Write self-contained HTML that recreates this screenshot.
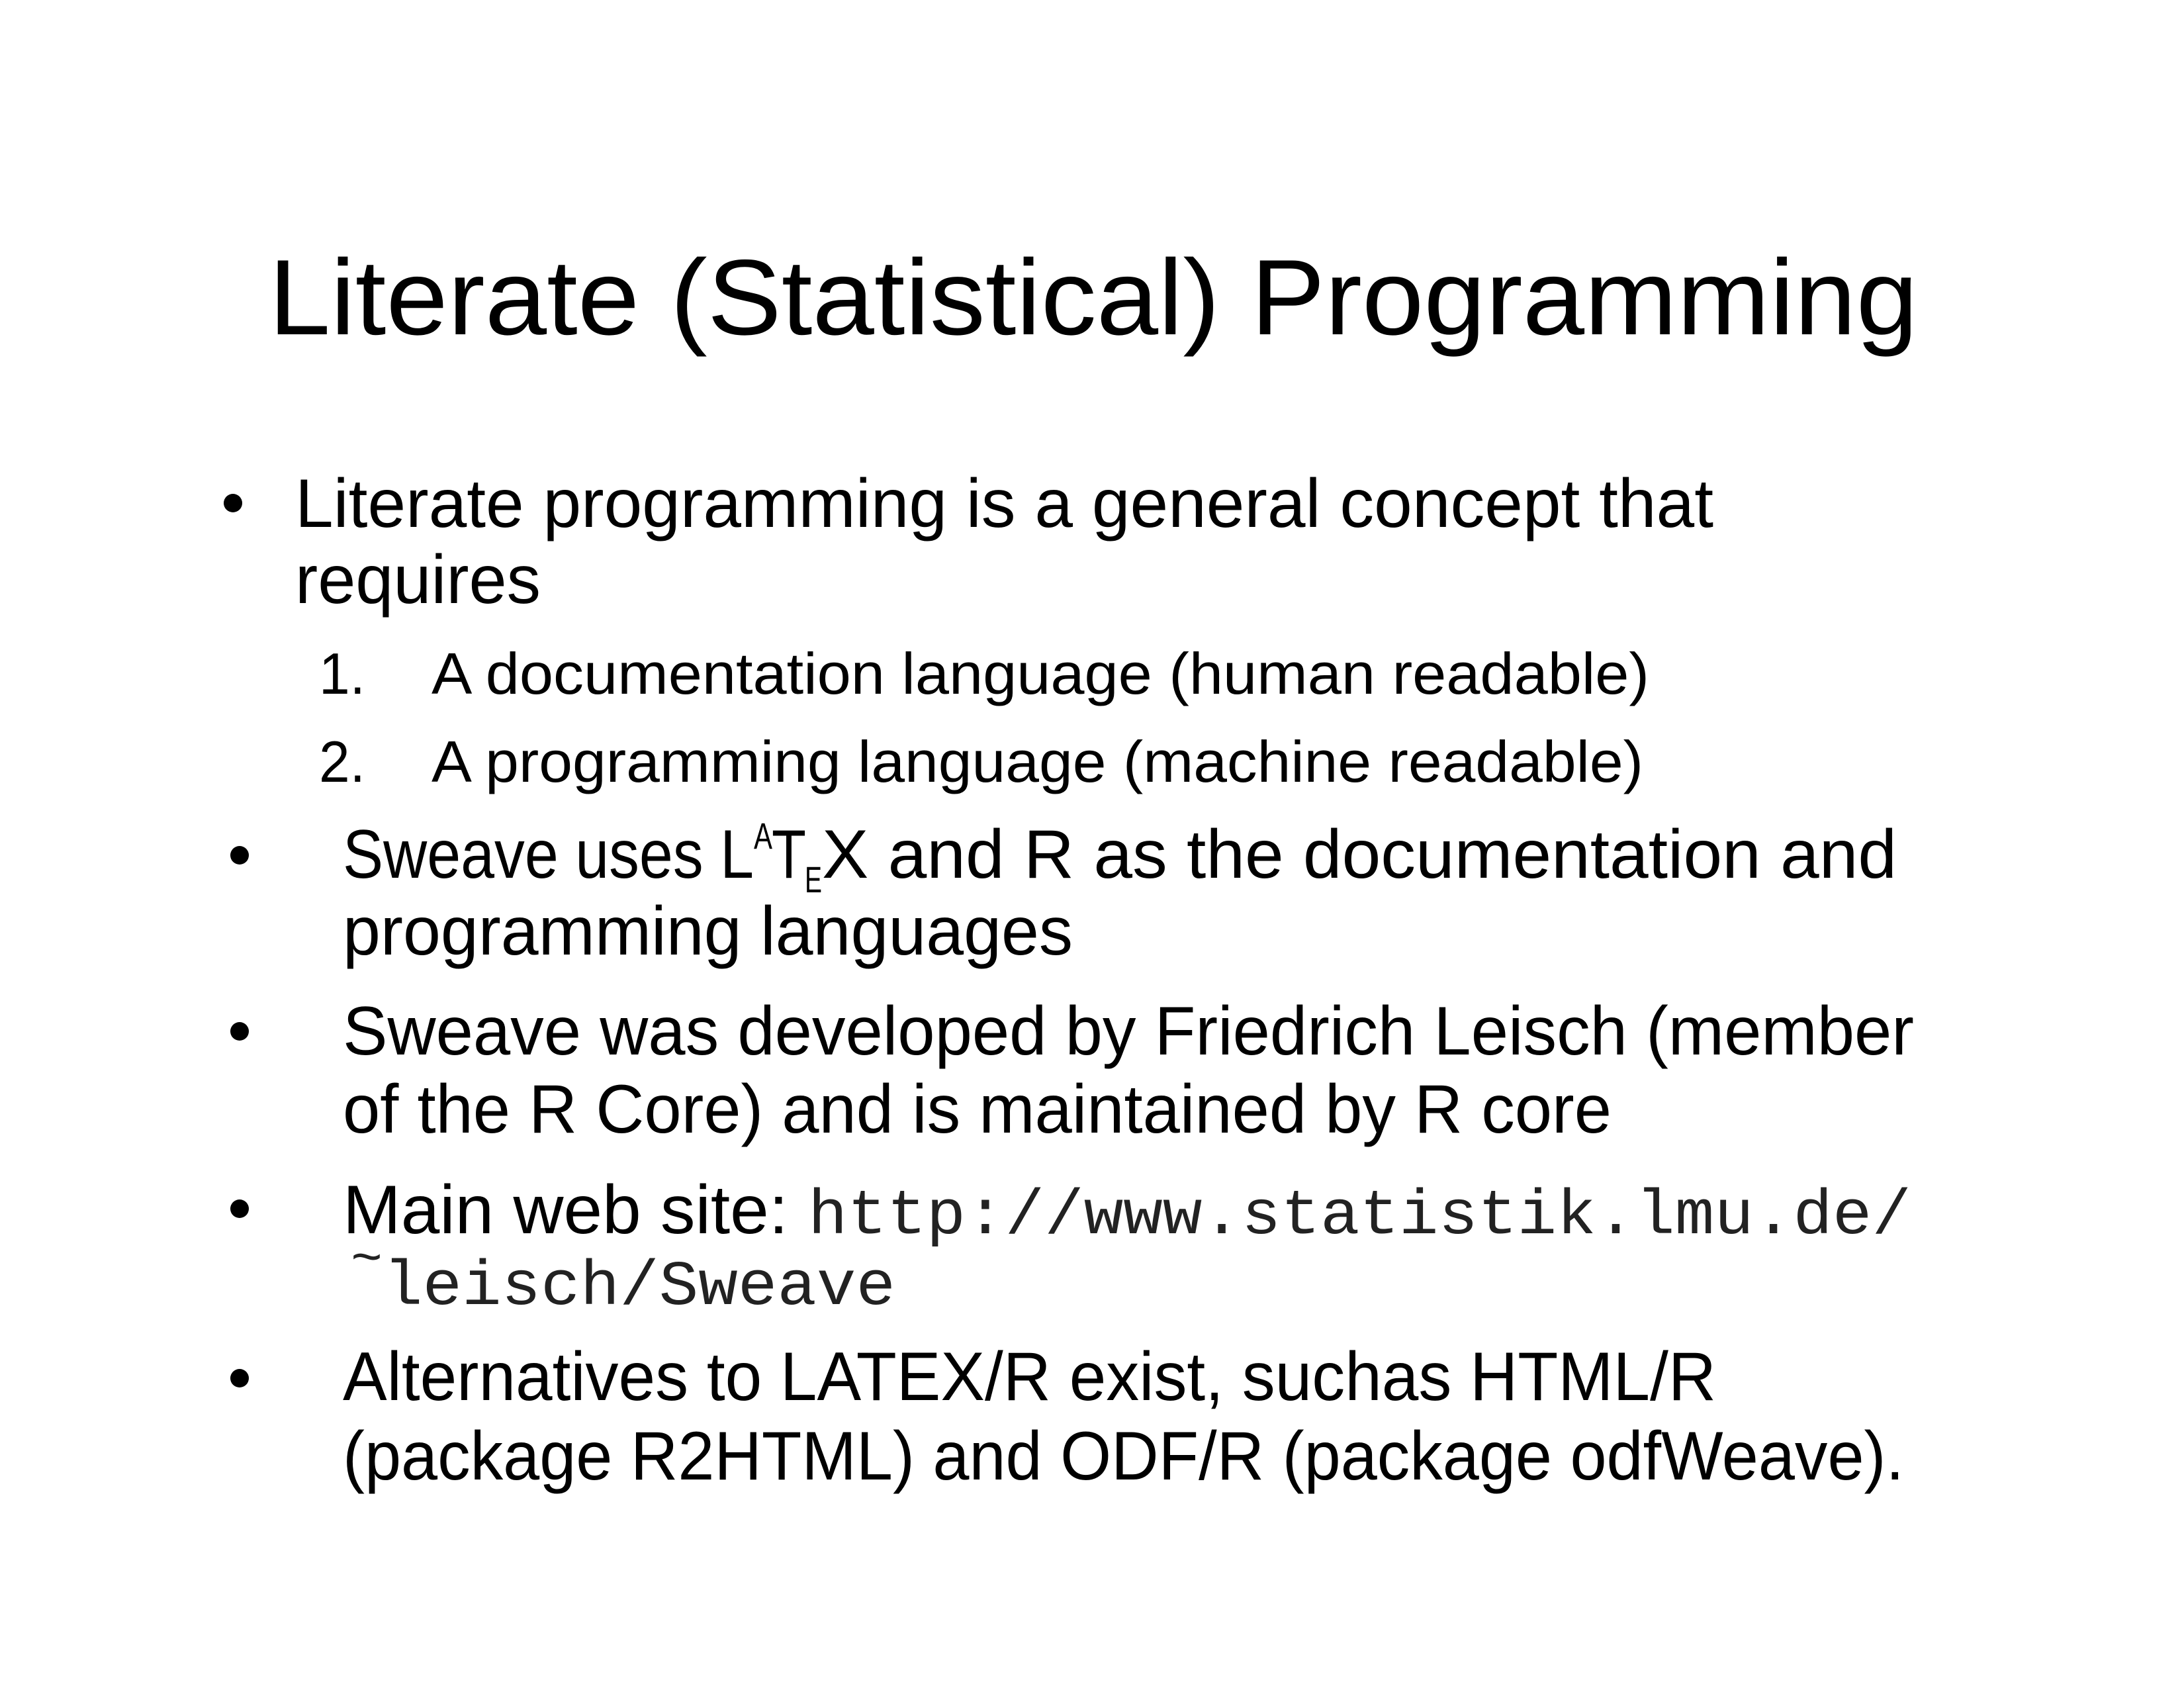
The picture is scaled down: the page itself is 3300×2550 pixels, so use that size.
<!DOCTYPE html>
<html><head><meta charset="utf-8"><style>
html,body{margin:0;padding:0;background:#fff;}
svg{display:block;}
text{font-family:"Liberation Sans",sans-serif;fill:#000;}
.m{font-family:"Liberation Mono",monospace;fill:#222;}
</style></head><body>
<svg width="3300" height="2550" viewBox="0 0 3300 2550" xmlns="http://www.w3.org/2000/svg">
<rect width="3300" height="2550" fill="#fff"/>
<text x="406" y="505" font-size="162" textLength="2492" lengthAdjust="spacingAndGlyphs">Literate (Statistical) Programming</text>

<circle cx="352" cy="760" r="14"/>
<text x="446" y="796" font-size="104" textLength="2143" lengthAdjust="spacingAndGlyphs">Literate programming is a general concept that</text>
<text x="446" y="911" font-size="104" textLength="371" lengthAdjust="spacingAndGlyphs">requires</text>

<text x="482" y="1048" font-size="88" textLength="70" lengthAdjust="spacingAndGlyphs">1.</text>
<text x="652" y="1048" font-size="88" textLength="1840" lengthAdjust="spacingAndGlyphs">A documentation language (human readable)</text>
<text x="482" y="1181" font-size="88" textLength="70" lengthAdjust="spacingAndGlyphs">2.</text>
<text x="652" y="1181" font-size="88" textLength="1831" lengthAdjust="spacingAndGlyphs">A programming language (machine readable)</text>

<circle cx="362" cy="1292" r="14"/>
<text x="518" y="1326" font-size="104" textLength="621" lengthAdjust="spacingAndGlyphs">Sweave uses L</text>
<text x="1139" y="1282" font-size="56" textLength="28" lengthAdjust="spacingAndGlyphs">A</text>
<text x="1166" y="1326" font-size="104" textLength="52" lengthAdjust="spacingAndGlyphs">T</text>
<text x="1216" y="1348" font-size="56" textLength="26" lengthAdjust="spacingAndGlyphs">E</text>
<text x="1242" y="1326" font-size="104" textLength="1624" lengthAdjust="spacingAndGlyphs">X and R as the documentation and</text>
<text x="518" y="1442" font-size="104" textLength="1103" lengthAdjust="spacingAndGlyphs">programming languages</text>

<circle cx="362" cy="1558" r="14"/>
<text x="518" y="1593" font-size="104" textLength="2374" lengthAdjust="spacingAndGlyphs">Sweave was developed by Friedrich Leisch (member</text>
<text x="518" y="1711" font-size="104" textLength="1917" lengthAdjust="spacingAndGlyphs">of the R Core) and is maintained by R core</text>

<circle cx="362" cy="1826" r="14"/>
<text x="518" y="1863" font-size="104" textLength="673" lengthAdjust="spacingAndGlyphs">Main web site:</text>
<text class="m" x="1221" y="1863" font-size="96" textLength="1667" lengthAdjust="spacingAndGlyphs">http://www.statistik.lmu.de/</text>
<text class="m" x="530" y="1925" font-size="80">~</text>
<text class="m" x="579" y="1970" font-size="96" textLength="774" lengthAdjust="spacingAndGlyphs">leisch/Sweave</text>

<circle cx="362" cy="2082" r="14"/>
<text x="518" y="2115" font-size="104" textLength="2075" lengthAdjust="spacingAndGlyphs">Alternatives to LATEX/R exist, suchas HTML/R</text>
<text x="518" y="2235" font-size="104" textLength="2359" lengthAdjust="spacingAndGlyphs">(package R2HTML) and ODF/R (package odfWeave).</text>
</svg>
</body></html>
